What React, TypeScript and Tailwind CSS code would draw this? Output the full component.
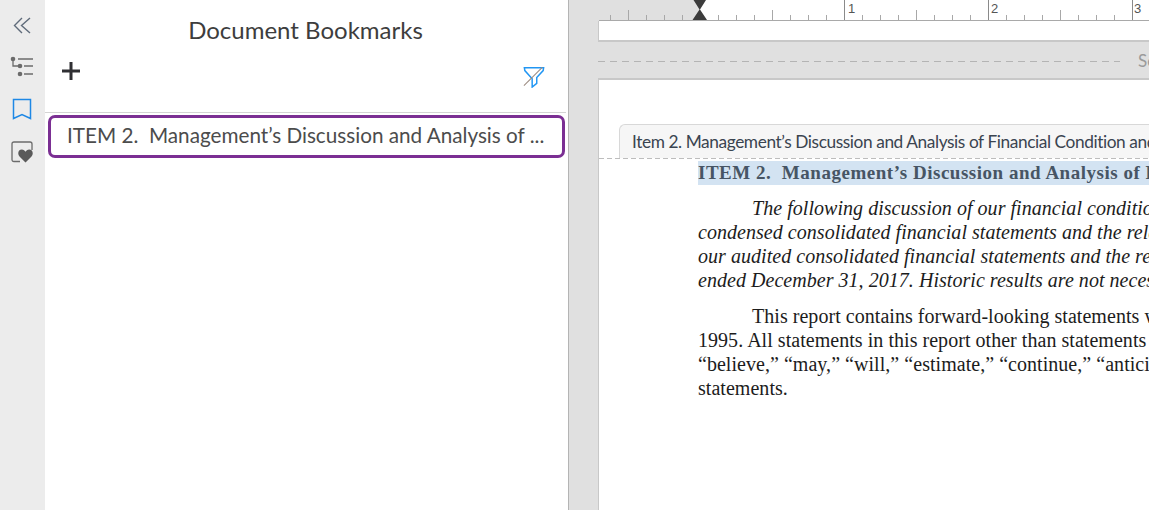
import React from "react";

function Ruler() {
  const origin = 700;
  const step = 18;
  const els: React.ReactNode[] = [];
  for (let i = -5; i <= 25; i++) {
    const x = origin + i * step - 598 + 0.5;
    const mod = ((i % 8) + 8) % 8;
    if (i === 0) continue;
    let h = 5;
    if (mod === 4) h = 10;
    if (mod === 0) h = 20;
    els.push(<line key={i} x1={x} x2={x} y1={20 - h} y2={20} stroke={mod === 0 ? "#8a8a8a" : "#a8a8a8"} strokeWidth="1" />);
  }
  return (
    <svg width="551" height="21" className="block">
      <rect x="2" y="0" width="100" height="20" fill="#e0e0e0" />
      <rect x="102" y="0" width="449" height="20" fill="#ffffff" />
      {els}
      <line x1="1" x2="551" y1="20.5" y2="20.5" stroke="#a9a9a9" />
      <path d="M95.5 0 H108 L102 9.5 L109 20 H94.5 L101.5 9.5Z" fill="#3c3c3c" />
      <text x="250" y="13" fontSize="13" fill="#555" fontFamily="Liberation Sans, sans-serif">1</text>
      <text x="393" y="13" fontSize="13" fill="#555" fontFamily="Liberation Sans, sans-serif">2</text>
      <text x="536" y="13" fontSize="13" fill="#555" fontFamily="Liberation Sans, sans-serif">3</text>
    </svg>
  );
}

function RailIcons() {
  return (
    <div className="flex flex-col items-center pr-[1px]">
      <svg width="18" height="18" viewBox="0 0 18 18" className="mt-[16px]" fill="none" stroke="#5f6b7a" strokeWidth="1.4">
        <path d="M9 2 L1.5 9.5 L9 17" />
        <path d="M17 2 L8.5 9.5 L17 17" />
      </svg>
      <svg width="24" height="22" viewBox="0 0 24 22" className="mt-[22px]" fill="none">
        <path d="M3 3 V10 H8" stroke="#6b6b6b" strokeWidth="1.3" />
        <circle cx="3" cy="3" r="2.3" fill="#6b6b6b" />
        <circle cx="10" cy="10" r="2.3" fill="#6b6b6b" />
        <circle cx="10" cy="18" r="2.3" fill="#6b6b6b" />
        <path d="M8 3 H23 M14 10 H23 M14 18 H23" stroke="#6b6b6b" strokeWidth="1.3" />
      </svg>
      <svg width="20" height="24" viewBox="0 0 20 24" className="mt-[20px]" fill="none" stroke="#1e88e5" strokeWidth="1.5">
        <path d="M1.5 1.5 H18.5 V20.5 L10 16.5 L1.5 20.5 Z" />
      </svg>
      <svg width="22" height="22" viewBox="0 0 22 22" className="mt-[19px]" fill="none">
        <path d="M9 20.5 H3 Q1 20.5 1 18.5 V3 Q1 1 3 1 H19 Q21 1 21 3 V9" stroke="#6b6b6b" strokeWidth="1.3" />
        <path d="M14.5 21.5 L8.5 15.5 C6 12.5 7.5 8.5 10.8 8.5 C12.6 8.5 13.8 9.6 14.5 10.8 C15.2 9.6 16.4 8.5 18.2 8.5 C21.5 8.5 23 12.5 20.5 15.5 Z" fill="#5a5a5a" />
      </svg>
    </div>
  );
}

export default function App() {
  return (
    <div className="flex h-[510px] w-[1149px] overflow-hidden bg-white font-['Lato','Liberation_Sans',sans-serif]">
      <div className="w-[45px] shrink-0 bg-[#ececec]">
        <RailIcons />
      </div>

      <div className="flex w-[524px] shrink-0 flex-col border-r border-[#b4b4b4] bg-white">
        <div className="pr-[2px]">
          <h1 className="mt-[15px] text-center text-[24px] leading-[30px] font-normal text-[#3d3d3d]">Document Bookmarks</h1>
          <div className="flex h-[68px] items-start justify-between border-b border-[#d4d4d4] pr-[20px] pl-[16px]">
            <svg width="20" height="20" viewBox="0 0 20 20" className="mt-[16px]">
              <path d="M1 10 H19 M10 1 V19" stroke="#2f2f33" strokeWidth="3" />
            </svg>
            <svg width="24" height="22" viewBox="0 0 24 24" className="mt-[21px]" fill="none">
              <path d="M1.5 2 H22.5 L22 5 L15 12.5 V19 L10 23 V14 L2 5 Z" stroke="#2196f3" strokeWidth="1.6" fill="#fff" />
              <path d="M1 21.5 L21 1.5" stroke="#9a8a80" strokeWidth="1.1" />
            </svg>
          </div>
        </div>
        <div className="mt-[2px] ml-[3px] flex h-[43px] w-[517px] items-center rounded-[7px] border-[3px] border-[#7b2f93] pr-[16px] pb-[2px] pl-[16px]">
          <span className="text-[20.7px] whitespace-pre text-[#4c4c4c]">ITEM 2.  Management’s Discussion and Analysis of ...</span>
        </div>
      </div>

      <div className="w-[29px] shrink-0 bg-[#e0e0e0]" />

      <div className="flex min-w-0 flex-1 flex-col bg-[#e0e0e0]">
        <Ruler />
        <div className="h-[21px] border-b-2 border-l border-[#c8c8c8] bg-white" />
        <div className="flex h-[36px] shrink-0 items-center overflow-hidden pt-[2px]">
          <div className="h-px w-[522px] shrink-0 bg-[repeating-linear-gradient(90deg,#b4b4b4_0,#b4b4b4_7px,transparent_7px,transparent_12px)]" />
          <span className="ml-[18px] text-[17px] whitespace-nowrap text-[#9a9a9a]">Section</span>
        </div>
        <div className="flex-1 overflow-hidden border-t-2 border-l border-[#c8c8c8] bg-white pt-[44px]">
          <div className="ml-[20px] flex h-[34px] items-center overflow-hidden rounded-tl-[6px] border-t border-l border-[#d8d8d8] bg-[#f6f6f6] pl-[12px] text-[17.3px] tracking-[-0.41px] whitespace-nowrap text-[#3a4450]">
            Item 2. Management’s Discussion and Analysis of Financial Condition and Results of Operations
          </div>
          <div className="h-px bg-[repeating-linear-gradient(90deg,#bdbdbd_0,#bdbdbd_5px,transparent_5px,transparent_8px)]" />
          <div className="pt-[2px] pl-[99px] font-['Liberation_Serif',serif] text-[20px] leading-[24px] tracking-[0.04px] whitespace-nowrap text-[#1c1c1c]">
            <p className="bg-[#d3e3f2] text-[19px] font-bold tracking-[0.52px] whitespace-pre text-[#475564]">ITEM 2.  Management’s Discussion and Analysis of Financial Condition</p>
            <div className="mt-[11px] italic">
              <p className="pl-[54px]">The following discussion of our financial condition and results of operations</p>
              <p>condensed consolidated financial statements and the related notes included</p>
              <p>our audited consolidated financial statements and the related notes for</p>
              <p>ended December 31, 2017. Historic results are not necessarily indicative</p>
            </div>
            <div className="mt-[12px]">
              <p className="pl-[54px]">This report contains forward-looking statements within the meaning</p>
              <p>1995. All statements in this report other than statements of historical fact</p>
              <p>“believe,” “may,” “will,” “estimate,” “continue,” “anticipate,” “intend,”</p>
              <p>statements.</p>
            </div>
          </div>
        </div>
      </div>
    </div>
  );
}
